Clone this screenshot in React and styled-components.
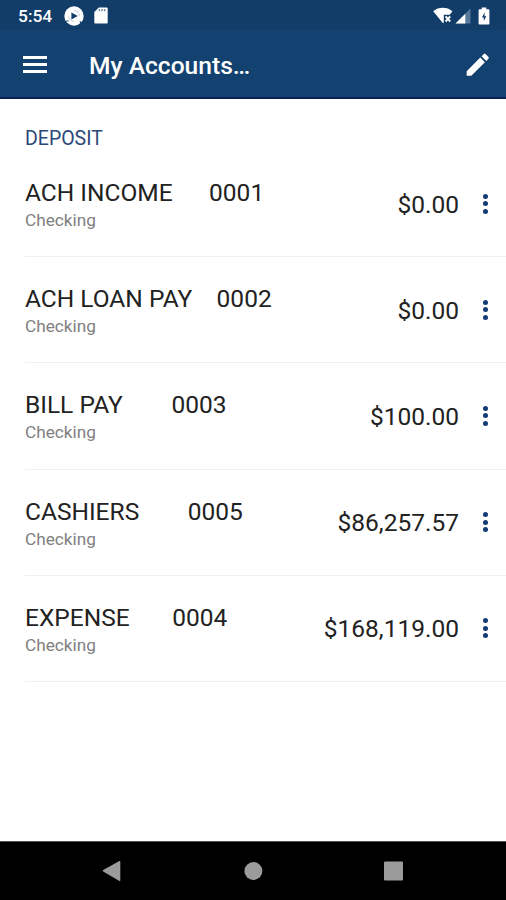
import React from 'react';
import styled, { createGlobalStyle } from 'styled-components';

const accounts = [
  { name: 'ACH INCOME      0001', type: 'Checking', balance: '$0.00' },
  { name: 'ACH LOAN PAY    0002', type: 'Checking', balance: '$0.00' },
  { name: 'BILL PAY        0003', type: 'Checking', balance: '$100.00' },
  { name: 'CASHIERS        0005', type: 'Checking', balance: '$86,257.57' },
  { name: 'EXPENSE       0004', type: 'Checking', balance: '$168,119.00' },
];

const App = () => (
  <Screen>
    <GlobalStyle />
    <StatusBar>
      <Clock>5:54</Clock>
      <PlayBadge />
      <SdCard />
      <Spacer />
      <Wifi />
      <Signal />
      <Battery />
    </StatusBar>

    <AppBar>
      <MenuButton aria-label="Menu">
        <MenuLine />
        <MenuLine />
        <MenuLine />
      </MenuButton>
      <Title>My Accounts…</Title>
      <EditButton aria-label="Edit">
        <Pencil />
      </EditButton>
    </AppBar>

    <Content>
      <SectionTitle>DEPOSIT</SectionTitle>
      {accounts.map(account => (
        <AccountRow key={account.name}>
          <AccountInfo>
            <AccountName>{account.name}</AccountName>
            <AccountType>{account.type}</AccountType>
          </AccountInfo>
          <Balance>{account.balance}</Balance>
          <MoreButton aria-label="More">
            <Dot />
            <Dot />
            <Dot />
          </MoreButton>
        </AccountRow>
      ))}
    </Content>

    <NavBar>
      <NavIcon width="20" height="22" viewBox="0 0 20 22">
        <path d="M1.2 10.1 17.4 1c.5-.3.9 0 .9.5v18.9c0 .5-.4.8-.9.5L1.2 11.6c-.6-.4-.6-1.1 0-1.5z" />
      </NavIcon>
      <NavIcon width="20" height="20" viewBox="0 0 20 20">
        <circle cx="10.4" cy="10" r="9" />
      </NavIcon>
      <NavIcon width="20" height="20" viewBox="0 0 20 20">
        <rect x="0" y="0.6" width="19" height="19" rx="1" />
      </NavIcon>
    </NavBar>
  </Screen>
);

export default App;

// --- Icons ---

const PlayBadge = () => (
  <StatusIcon $left={12} width="20" height="20" viewBox="0 0 20 20">
    <circle cx="10" cy="10" r="9.7" fill="#fff" />
    <path d="M10 4.6A5.4 5.4 0 0 1 15.4 10M10 15.4A5.4 5.4 0 0 1 4.6 10" fill="none" stroke="#b9c8d8" strokeWidth="0.8" />
    <path d="M2.2 15.2l2.4-.5M16.8 17.3l-.8-2.1" stroke="#113d68" strokeWidth="1.1" />
    <path d="M7.4 6.4v7.2l6.4-3.6z" fill="#113d68" />
  </StatusIcon>
);

const SdCard = () => (
  <StatusIcon $left={10} width="14" height="17" viewBox="0 0 14 17">
    <path d="M4.8.5h7.6c.8 0 1.3.5 1.3 1.3v13.4c0 .8-.5 1.3-1.3 1.3H1.6c-.8 0-1.3-.5-1.3-1.3V5z" fill="#fff" />
    <path d="M5.4 2v2.3M8 2v2.3M10.6 2v2.3" stroke="#6d87a3" strokeWidth="1.4" />
  </StatusIcon>
);

const Wifi = () => (
  <StatusIcon width="20" height="17" viewBox="0 0 20 17">
    <path d="M.2 4.3C3 1.8 6.2.8 9.8.8s6.8 1 9.6 3.5l-2.6 3.4h-6v8.1L9.8 16z" fill="#fff" />
    <path d="M12.6 9.3l4.6 5.2M17.2 9.3l-4.6 5.2" stroke="#fff" strokeWidth="2" />
  </StatusIcon>
);

const Signal = () => (
  <StatusIcon $left={2} width="16" height="16" viewBox="0 0 16 16">
    <path d="M15.5.5v15H.5z" fill="#58789a" />
    <path d="M10.3 5.7v9.8H.5z" fill="#fff" />
  </StatusIcon>
);

const Battery = () => (
  <StatusIcon $left={7} width="12" height="18" viewBox="0 0 12 18">
    <path d="M3.7.5h4.6v1.8h2c.6 0 1.1.5 1.1 1.1v13c0 .6-.5 1.1-1.1 1.1H1.7c-.6 0-1.1-.5-1.1-1.1v-13c0-.6.5-1.1 1.1-1.1h2z" fill="#fff" />
    <path d="M6.6 5.6L4 10.4h1.8v3.7l2.5-4.8H6.6z" fill="#113d68" />
  </StatusIcon>
);

const Pencil = () => (
  <svg width="29.5" height="29.5" viewBox="0 0 24 24" fill="#fff">
    <path d="M3 17.25V21h3.75L17.81 9.94l-3.75-3.75L3 17.25zM20.71 7.04a1 1 0 0 0 0-1.41l-2.34-2.34a1 1 0 0 0-1.41 0l-1.83 1.83 3.75 3.75 1.83-1.83z" />
  </svg>
);

// --- Styles ---

const GlobalStyle = createGlobalStyle`
  * {
    box-sizing: border-box;
  }
  body {
    margin: 0;
    font-family: Roboto, sans-serif;
    background: #fff;
  }
`;

const Screen = styled.div`
  width: 506px;
  height: 900px;
  display: flex;
  flex-direction: column;
  overflow: hidden;
  background: #fff;
`;

const StatusBar = styled.div`
  height: 30px;
  display: flex;
  align-items: center;
  padding: 1px 16px 0 18px;
  background: #113d68;
`;

const Clock = styled.span`
  font-size: 17.4px;
  font-weight: 500;
  color: #fff;
`;

const StatusIcon = styled.svg`
  flex: none;
  margin-left: ${props => props.$left || 0}px;
`;

const Spacer = styled.div`
  flex: 1;
`;

const AppBar = styled.header`
  height: 69px;
  display: flex;
  align-items: center;
  padding: 2px 14px 0 23px;
  background: #134270;
  border-bottom: 2px solid #0b1f58;
`;

const IconButton = styled.button`
  display: flex;
  padding: 0;
  border: none;
  background: none;
`;

const MenuButton = styled(IconButton)`
  width: 24px;
  flex-direction: column;
  gap: 4px;
`;

const MenuLine = styled.span`
  height: 3px;
  background: #fff;
`;

const Title = styled.h1`
  flex: 1;
  margin: 2px 0 0 42px;
  font-size: 24.6px;
  font-weight: 500;
  line-height: 30px;
  color: #fff;
`;

const EditButton = styled(IconButton)`
  align-items: center;
`;

const Content = styled.main`
  flex: 1;
  padding-left: 25px;
`;

const SectionTitle = styled.h2`
  height: 52px;
  margin: 0;
  padding-top: 28px;
  font-size: 19.5px;
  font-weight: 400;
  line-height: 24px;
  color: #2b4878;
`;

const AccountRow = styled.div`
  height: 106.2px;
  display: flex;
  align-items: center;
  border-bottom: 1px solid #f0f0f0;
`;

const AccountInfo = styled.div`
  flex: 1;
  padding-top: 3px;
`;

const AccountName = styled.div`
  font-size: 24.5px;
  font-weight: 400;
  line-height: 30px;
  white-space: pre;
  color: #222;
`;

const AccountType = styled.div`
  font-size: 17.2px;
  line-height: 24px;
  color: #808080;
`;

const Balance = styled.div`
  padding-top: 2px;
  font-size: 24.5px;
  font-weight: 400;
  line-height: 30px;
  color: #222;
`;

const MoreButton = styled(IconButton)`
  width: 47px;
  padding-left: 24px;
  flex-direction: column;
  gap: 2.5px;
`;

const Dot = styled.span`
  width: 5px;
  height: 5px;
  border-radius: 50%;
  background: #123c74;
`;

const NavBar = styled.nav`
  height: 59px;
  display: flex;
  align-items: center;
  justify-content: space-between;
  padding: 0 102px;
  background: #000;
  border-top: 1px solid #555;
`;

const NavIcon = styled.svg`
  fill: #9b9b9b;
`;
